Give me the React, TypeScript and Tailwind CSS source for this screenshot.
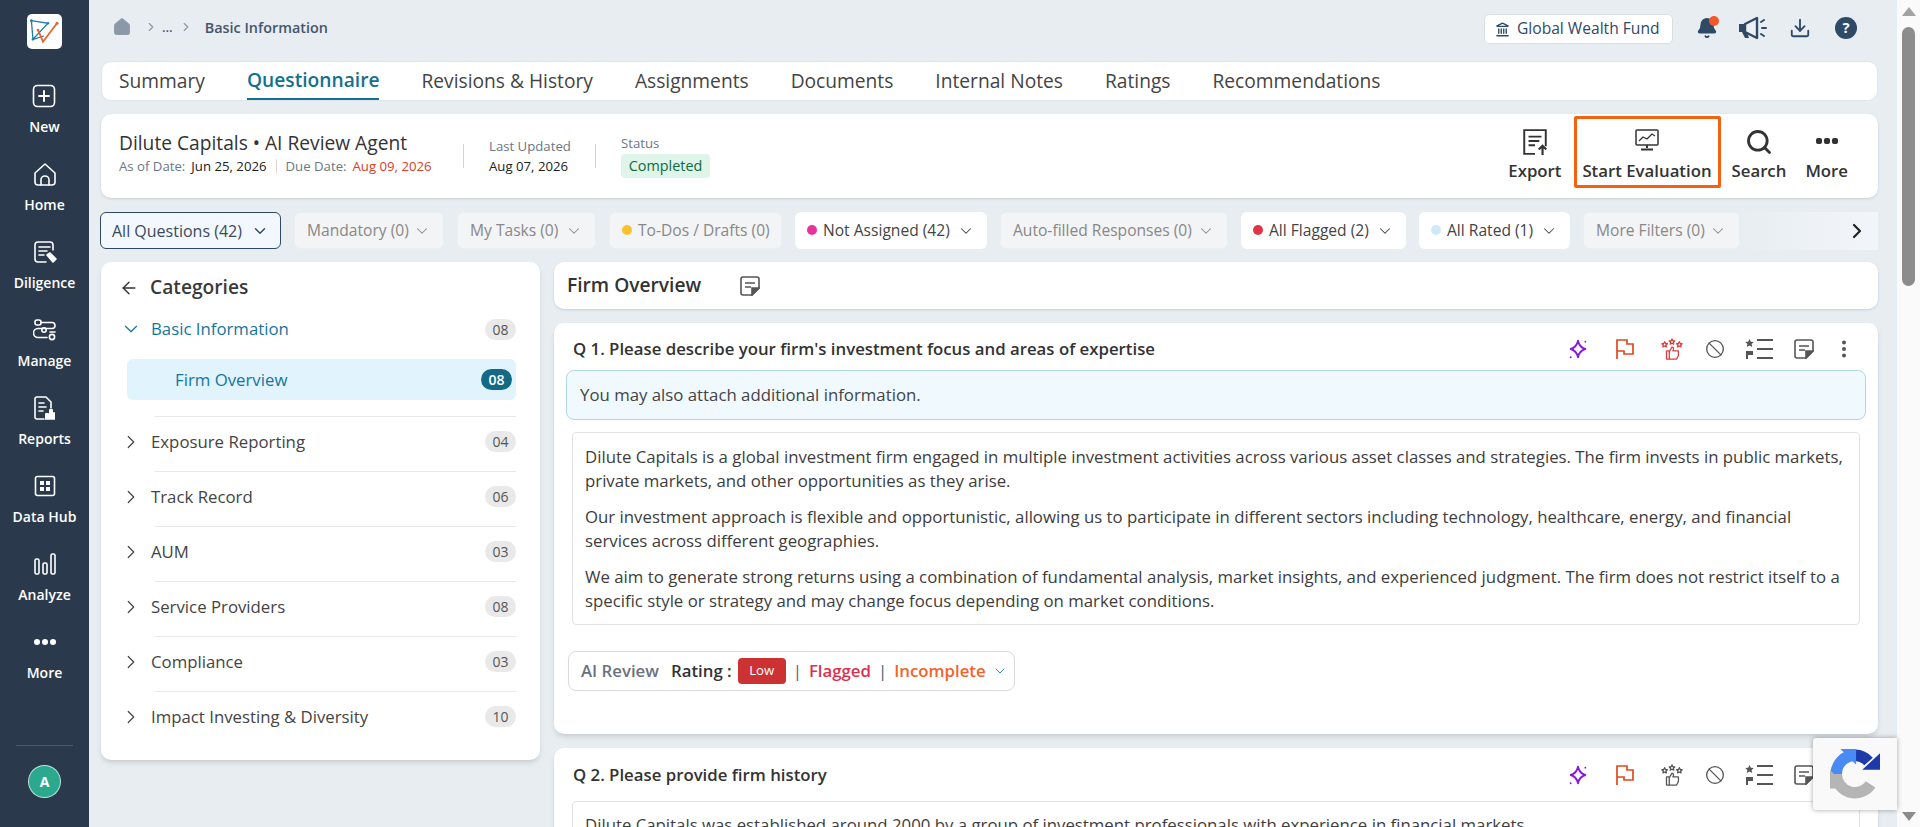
import * as React from 'react';
import {
  Home as HomeIcon, ChevronRight, ChevronDown, ArrowLeft, Landmark, Download, Bell,
  Search, Ban, EllipsisVertical,
} from 'lucide-react';

const sw = { fill: 'none', stroke: 'currentColor', strokeWidth: 1.6, strokeLinecap: 'round', strokeLinejoin: 'round' } as const;

function Logo() {
  return (
    <svg viewBox="0 0 35 35" className="h-[35px] w-[35px] rounded-[5px] bg-white">
      <path d="M4.400 6.700 21 9.300 6 25.300Z M4.400 6.700 6 25.300 17 22" fill="none" stroke="#1f7fa8" strokeWidth="1.3" />
      <path d="M11 16 16 27.700 30 9.300" fill="none" stroke="#e8642c" strokeWidth="1.8" />
      <circle cx="30" cy="9.300" r="1.500" fill="#e8642c" />
      <circle cx="11" cy="16" r="1.300" fill="#e8642c" />
      <circle cx="4.400" cy="6.700" r="1.400" fill="#1f7fa8" />
      <circle cx="21" cy="9.300" r="1.200" fill="#1f7fa8" />
      <circle cx="6" cy="25.300" r="1.300" fill="#1f7fa8" />
    </svg>
  );
}

const NewIcon = () => (
  <svg viewBox="0 0 24 24" className="h-6 w-6" {...sw}>
    <rect x="1.500" y="1.500" width="21" height="21" rx="4" />
    <path d="M12 7v10M7 12h10" strokeWidth="2" />
  </svg>
);
const HomeNav = () => (
  <svg viewBox="0 0 24 24" className="h-6 w-6" {...sw}>
    <path d="M2 11 12 2l10 9v9a3 3 0 0 1-3 3H5a3 3 0 0 1-3-3Z" />
    <path d="M8 23v-5a4 4 0 0 1 8 0v5" />
  </svg>
);
const DiligenceIcon = () => (
  <svg viewBox="0 0 24 24" className="h-6 w-6" {...sw}>
    <path d="M20 10V5a3 3 0 0 0-3-3H5a3 3 0 0 0-3 3v14a3 3 0 0 0 3 3h8" />
    <path d="M6 7h11M6 11h8M6 15h5" />
    <path d="m14 15 3-2 6 6-3 3Z" fill="currentColor" />
  </svg>
);
const ManageIcon = () => (
  <svg viewBox="0 0 24 24" className="h-6 w-6" {...sw}>
    <rect x="2" y="2" width="6" height="5" rx="2" />
    <path d="M8 4.500h11a3 3 0 0 1 0 6H5a3 3 0 0 0 0 9h9" />
    <circle cx="11" cy="12" r="2.200" />
    <circle cx="19" cy="19" r="2.600" />
    <path d="M17 14h5" />
  </svg>
);
const ReportsIcon = () => (
  <svg viewBox="0 0 24 24" className="h-6 w-6" {...sw}>
    <path d="M12 23H5a2 2 0 0 1-2-2V3a2 2 0 0 1 2-2h9l5 5v6" />
    <path d="M7 7h5M7 11h7M7 15h4" />
    <path d="M14 23v-5h2v5M18 23v-9h2v9M22 23v-6" strokeWidth="2" />
  </svg>
);
const DataHubIcon = () => (
  <svg viewBox="0 0 24 24" className="h-6 w-6" {...sw}>
    <rect x="2.500" y="2.500" width="19" height="19" rx="2" />
    <rect x="7" y="7" width="4" height="4" fill="currentColor" stroke="none" />
    <rect x="13" y="7" width="4" height="4" fill="currentColor" stroke="none" />
    <rect x="7" y="13" width="4" height="4" fill="currentColor" stroke="none" />
    <rect x="13" y="13" width="4" height="4" fill="currentColor" stroke="none" />
  </svg>
);
const AnalyzeIcon = () => (
  <svg viewBox="0 0 24 24" className="h-6 w-6" {...sw}>
    <rect x="2" y="7" width="4" height="15" rx="1.500" />
    <rect x="10" y="11" width="4" height="11" rx="1.500" />
    <rect x="18" y="2" width="4" height="20" rx="1.500" />
  </svg>
);
const MoreDots = () => (
  <svg viewBox="0 0 24 24" className="h-6 w-6" fill="currentColor">
    <circle cx="4" cy="12" r="3" />
    <circle cx="12" cy="12" r="3" />
    <circle cx="20" cy="12" r="3" />
  </svg>
);

const sideItems = [
  { label: 'New', icon: NewIcon },
  { label: 'Home', icon: HomeNav },
  { label: 'Diligence', icon: DiligenceIcon },
  { label: 'Manage', icon: ManageIcon },
  { label: 'Reports', icon: ReportsIcon },
  { label: 'Data Hub', icon: DataHubIcon },
  { label: 'Analyze', icon: AnalyzeIcon },
  { label: 'More', icon: MoreDots },
];

function Sidebar() {
  return (
    <aside className="flex h-full w-[89px] shrink-0 flex-col items-center bg-[#2a3a4c] text-white">
      <div className="mt-[14px] mb-[35px]"><Logo /></div>
      {sideItems.map((item) => {
        const Icon = item.icon;
        return (
          <div key={item.label} className="flex h-[78px] flex-col items-center">
            <div className="flex h-[24px] items-center"><Icon /></div>
            <span className="mt-[10px] text-[14px] leading-[18px] font-semibold">{item.label}</span>
          </div>
        );
      })}
      <div className="mt-auto mb-[29px] flex w-[57px] flex-col items-center border-t border-[#4a5a6c] pt-[19px]">
        <div className="flex h-[33px] w-[33px] items-center justify-center rounded-full border border-white/70 bg-[#2aa98f] text-[14px] font-bold">A</div>
      </div>
    </aside>
  );
}

const MegaphoneIcon = () => (
  <svg viewBox="0 0 30 24" className="h-[24px] w-[30px]">
    <path d="M1 8h6v8H1Z M4 16h5l2 6H7Z" fill="#2f4a66" />
    <path d="M7 8 19 2v20L7 16Z" fill="#fff" fillOpacity="0.2" stroke="#2f4a66" strokeWidth="2.400" strokeLinejoin="round" />
    <path d="m23 6 3-2M24 12h4M23 18l3 2" stroke="#2f4a66" strokeWidth="2" strokeLinecap="round" />
  </svg>
);

function TopBar() {
  return (
    <div className="flex h-[61px] shrink-0 items-center justify-between pr-[21px] pb-[6px] pl-[11px]">
      <div className="flex items-center text-[#8a98a8]">
        <HomeIcon className="h-[20px] w-[20px]" fill="currentColor" strokeWidth={1} />
        <ChevronRight className="ml-[12px] h-[14px] w-[14px]" />
        <span className="ml-[4px] text-[13px] font-semibold text-[#4a6078]">...</span>
        <ChevronRight className="ml-[6px] h-[14px] w-[14px]" />
        <span className="ml-[12px] text-[14.4px] font-semibold text-[#44566a]">Basic Information</span>
      </div>
      <div className="flex items-center text-[#2f4a66]">
        <div className="mt-[3px] flex h-[30px] w-[189px] items-center gap-[7px] rounded-[5px] border border-[#d9dfe6] bg-white pl-[10px] text-[15.6px]">
          <Landmark className="h-[15px] w-[15px]" strokeWidth={2.2} />
          Global Wealth Fund
        </div>
        <div className="relative ml-[23px] flex">
          <Bell className="h-[22px] w-[22px]" fill="currentColor" />
          <span className="absolute -top-[1px] right-[-1px] h-[10px] w-[10px] rounded-full bg-[#f2582a]" />
        </div>
        <span className="ml-[20px] flex"><MegaphoneIcon /></span>
        <Download className="ml-[21px] h-[22px] w-[22px]" />
        <div className="ml-[24px] flex h-[22px] w-[22px] items-center justify-center rounded-full bg-[#2f4a66] text-[15px] font-bold text-white">?</div>
      </div>
    </div>
  );
}

const tabs = ['Summary', 'Questionnaire', 'Revisions & History', 'Assignments', 'Documents', 'Internal Notes', 'Ratings', 'Recommendations'];

function Tabs() {
  return (
    <div className="flex h-[40px] shrink-0 items-stretch gap-[42px] rounded-[10px] border border-[#e0e5ea] bg-white pl-[17px]">
      {tabs.map((t) => (
        <div
          key={t}
          className={t === 'Questionnaire'
            ? 'flex items-center border-b-[2px] border-[#14708f] pt-[1px] text-[19.2px] font-semibold text-[#14708f]'
            : 'flex items-center text-[19.2px] text-[#444]'}
        >
          {t}
        </div>
      ))}
    </div>
  );
}

const StartEvalIcon = () => (
  <svg viewBox="0 0 24 24" className="h-[24px] w-[24px]" fill="none" stroke="#333" strokeWidth="1.500" strokeLinejoin="round">
    <rect x="1" y="2" width="22" height="15" rx="1" />
    <path d="m4 13 4-4 4 2 5-5 3 2" strokeWidth="1.200" />
    <path d="M12 17v3M6 21.500h12" strokeWidth="2" />
  </svg>
);
const ExportIcon = () => (
  <svg viewBox="0 0 24 26" className="h-[28px] w-[26px]" fill="none" stroke="#333" strokeWidth="1.800">
    <path d="M12 24H2V2h20v15" />
    <path d="M6 8h12M6 12h10M6 16h6" />
    <path d="M19 25v-8M15.500 20l3.500-3.500 3.500 3.500" strokeWidth="2" />
  </svg>
);
const MoreSquares = () => (
  <svg viewBox="0 0 24 28" className="h-[28px] w-[24px]" fill="#333">
    <rect x="1" y="10" width="6" height="6" rx="2" />
    <rect x="9" y="10" width="6" height="6" rx="2" />
    <rect x="17" y="10" width="6" height="6" rx="2" />
  </svg>
);

function HeaderCard() {
  return (
    <div className="mt-[13px] flex h-[84px] shrink-0 items-center justify-between rounded-[10px] bg-white pr-[30px] pl-[18px] shadow-sm">
      <div className="flex items-center">
        <div className="mb-[8px] w-[319px]">
          <div className="mb-[2px] text-[19.2px] leading-[25px] text-[#333]">Dilute Capitals • AI Review Agent</div>
          <div className="flex items-center text-[13.2px] leading-[18px]">
            <span className="text-[#6b7785]">As of Date:</span>
            <span className="ml-[6px] font-medium text-[#222]">Jun 25, 2026</span>
            <span className="mx-[9px] h-[14px] w-px bg-[#e3d5d5]" />
            <span className="text-[#6b7785]">Due Date:</span>
            <span className="ml-[6px] font-medium text-[#d8402a]">Aug 09, 2026</span>
          </div>
        </div>
        <div className="mx-[25px] h-[24px] w-px bg-[#cfd4da]" />
        <div className="w-[81px] whitespace-nowrap">
          <div className="text-[13.2px] leading-[18px] text-[#6b7785]">Last Updated</div>
          <div className="mt-[2px] text-[13.2px] leading-[18px] font-medium text-[#222]">Aug 07, 2026</div>
        </div>
        <div className="mx-[25px] h-[24px] w-px bg-[#cfd4da]" />
        <div>
          <div className="text-[13.2px] leading-[16px] text-[#6b7785]">Status</div>
          <div className="mt-[3px] flex h-[24px] w-[89px] items-center justify-center rounded-[4px] bg-[#dff5ea] text-[14.4px] text-[#0d6b3d]">Completed</div>
        </div>
      </div>
      <div className="flex items-center text-[16.8px] font-semibold text-[#333]">
        <div className="flex flex-col items-center">
          <ExportIcon />
          <span className="mt-[2px]">Export</span>
        </div>
        <div className="mb-[8px] ml-[12px] flex h-[72px] w-[147px] flex-col items-center justify-center rounded-[2px] border-[3px] border-[#f4620f] pt-[8px]">
          <StartEvalIcon />
          <span className="mt-[6px]">Start Evaluation</span>
        </div>
        <div className="ml-[11px] flex flex-col items-center">
          <Search className="h-[28px] w-[28px]" strokeWidth={2.4} />
          <span className="mt-[2px]">Search</span>
        </div>
        <div className="ml-[19px] flex flex-col items-center">
          <MoreSquares />
          <span className="mt-[2px]">More</span>
        </div>
      </div>
    </div>
  );
}

const filters = [
  { label: 'All Questions (42)', w: 'w-[181px]', kind: 'active' },
  { label: 'Mandatory (0)', w: 'w-[150px]', kind: 'off' },
  { label: 'My Tasks (0)', w: 'w-[139px]', kind: 'off' },
  { label: 'To-Dos / Drafts (0)', w: 'w-[173px]', kind: 'off', dot: 'bg-[#fbc02d]', noChevron: true },
  { label: 'Not Assigned (42)', w: 'w-[192px]', kind: 'on', dot: 'bg-[#e6339a]' },
  { label: 'Auto-filled Responses (0)', w: 'w-[228px]', kind: 'off' },
  { label: 'All Flagged (2)', w: 'w-[165px]', kind: 'on', dot: 'bg-[#e03444]' },
  { label: 'All Rated (1)', w: 'w-[151px]', kind: 'on', dot: 'bg-[#cfe9fb]' },
  { label: 'More Filters (0)', w: 'w-[157px]', kind: 'off' },
];

function Filters() {
  return (
    <div className="relative mt-[13px] -ml-[1px] flex h-[37px] shrink-0 gap-[13px]">
      {filters.map((f) => (
        <div
          key={f.label}
          className={
            f.kind === 'active'
              ? `${f.w} flex shrink-0 items-center justify-between rounded-[6px] border border-[#2f4a66] bg-[#f2f8fd] px-[11px] text-[16px] font-medium text-[#3a4a5c]`
              : f.kind === 'on'
                ? `${f.w} flex shrink-0 items-center justify-between rounded-[6px] bg-white px-[12px] text-[15.6px] text-[#444]`
                : `${f.w} flex shrink-0 items-center justify-between rounded-[6px] border border-[#eceef0] bg-[#f3f4f5] px-[12px] text-[15.6px] text-[#888]`
          }
        >
          <span className="flex items-center gap-[6px] whitespace-nowrap">
            {f.dot && <span className={`${f.dot} h-[10px] w-[10px] rounded-full`} />}
            {f.label}
          </span>
          {!f.noChevron && <ChevronDown className="h-[18px] w-[18px]" strokeWidth={f.kind === 'active' ? 2 : 1.4} />}
        </div>
      ))}
      <div className="absolute top-0 right-0 flex h-[38px] w-[138px] items-center justify-end bg-gradient-to-r from-transparent to-[#f2f6fb] pr-[9px]">
        <ChevronRight className="h-[24px] w-[24px] text-[#222]" strokeWidth={2.2} />
      </div>
    </div>
  );
}

const categories = [
  { name: 'Exposure Reporting', n: '04' },
  { name: 'Track Record', n: '06' },
  { name: 'AUM', n: '03' },
  { name: 'Service Providers', n: '08' },
  { name: 'Compliance', n: '03' },
  { name: 'Impact Investing & Diversity', n: '10' },
];

function Categories() {
  return (
    <div className="h-[498px] w-[439px] shrink-0 rounded-[10px] bg-white pt-[12px] pr-[24px] pl-[18px] shadow-md">
      <div className="flex h-[27px] items-center">
        <ArrowLeft className="h-[20px] w-[20px] text-[#333]" strokeWidth={1.7} />
        <span className="ml-[11px] text-[19.2px] font-semibold text-[#3a3a3a]">Categories</span>
      </div>
      <div className="mt-[16px] flex h-[24px] items-center justify-between text-[#14769f]">
        <span className="flex items-center text-[16.8px]">
          <ChevronDown className="mr-[9px] ml-[1px] h-[22px] w-[22px]" strokeWidth={1.3} />
          Basic Information
        </span>
        <span className="flex h-[21px] w-[31px] items-center justify-center rounded-full bg-[#e9e9e9] text-[14px] text-[#555]">08</span>
      </div>
      <div className="mt-[18px] ml-[8px] flex h-[41px] items-center justify-between rounded-[6px] bg-[#e1f3fd] pr-[4px] pl-[48px] text-[16.8px] text-[#14769f]">
        Firm Overview
        <span className="flex h-[21px] w-[31px] items-center justify-center rounded-full bg-[#136a85] text-[14px] font-semibold text-white">08</span>
      </div>
      <div className="mt-[16px] ml-[36px] border-t border-[#e8e8e8]" />
      {categories.map((c, i) => (
        <div key={c.name}>
          <div className="flex h-[54px] items-center justify-between pb-[5px]">
            <span className="flex items-center text-[16.8px] text-[#444]">
              <ChevronRight className="mr-[9px] ml-[1px] h-[22px] w-[22px]" strokeWidth={1.3} />
              {c.name}
            </span>
            <span className="flex h-[21px] w-[31px] items-center justify-center rounded-full bg-[#e9e9e9] text-[14px] text-[#555]">{c.n}</span>
          </div>
          {i < categories.length - 1 && <div className="ml-[36px] border-t border-[#e8e8e8]" />}
        </div>
      ))}
    </div>
  );
}

const AiStar = () => (
  <svg viewBox="0 0 24 24" className="h-[22px] w-[22px]" fill="none" stroke="#8a14e0" strokeWidth="2" strokeLinejoin="round">
    <path d="M12 3c1 5 3 7.500 8 9-5 1.500-7 4-8 9-1-5-3-7.500-8-9 5-1.500 7-4 8-9Z" />
    <circle cx="20" cy="4" r="1" fill="#8a14e0" stroke="none" />
    <circle cx="4" cy="21" r="1" fill="#8a14e0" stroke="none" />
  </svg>
);
const FlagIcon = () => (
  <svg viewBox="0 0 20 22" className="h-[22px] w-[20px]" fill="none" stroke="#de4a1e" strokeWidth="1.700">
    <path d="M2 21V2h10v4h6v10h-9v-3H2" />
  </svg>
);
const RateIcon = ({ color }: { color: string }) => (
  <svg viewBox="0 0 24 24" className="h-[22px] w-[22px]" fill="none" stroke={color} strokeWidth="1.400" strokeLinejoin="round">
    <path d="m4 4 1 2 2 .2-1.500 1.500.4 2-1.900-1-1.900 1 .4-2L1 6.200 3 6Z" />
    <path d="m12 1 1 2 2 .2-1.500 1.500.4 2-1.900-1-1.900 1 .4-2L9 3.200 11 3Z" />
    <path d="m20 4 1 2 2 .2-1.500 1.500.4 2-1.900-1-1.900 1 .4-2L17 6.200 19 6Z" />
    <path d="M6 14h3v9H6ZM9 15l3-5c2 0 2 2 1 4h6v5l-2 4H9" />
  </svg>
);
const ListIcon = () => (
  <svg viewBox="0 0 28 22" className="h-[22px] w-[28px]" fill="#555">
    <path d="m4.500 1 1.300 2.800 3 .3-2.200 2 .6 3-2.700-1.500-2.700 1.500.6-3-2.200-2 3-.3Z" />
    <path d="M1 13h7v4H3v4H1Z" />
    <rect x="12" y="1" width="16" height="2" />
    <rect x="12" y="10" width="16" height="2" />
    <rect x="12" y="19" width="16" height="2" />
  </svg>
);
const NoteIcon = () => (
  <svg viewBox="0 0 20 20" className="h-[20px] w-[20px]" fill="none" stroke="#555" strokeWidth="1.600">
    <path d="M12 19H3a2 2 0 0 1-2-2V3a2 2 0 0 1 2-2h14a2 2 0 0 1 2 2v9Z" />
    <path d="M5 7h10M5 11h6" />
    <path d="M12 19v-7h7Z" fill="#555" />
  </svg>
);

function ActionIcons({ rateColor }: { rateColor: string }) {
  return (
    <div className="flex items-center text-[#555]">
      <AiStar />
      <span className="ml-[26px]"><FlagIcon /></span>
      <span className="ml-[26px]"><RateIcon color={rateColor} /></span>
      <Ban className="ml-[22px] h-[20px] w-[20px]" strokeWidth={1.6} />
      <span className="ml-[20px]"><ListIcon /></span>
      <span className="ml-[21px]"><NoteIcon /></span>
      <EllipsisVertical className="ml-[19px] h-[22px] w-[22px]" strokeWidth={2.4} />
    </div>
  );
}

function QuestionOne() {
  return (
    <div className="mt-[14px] h-[411px] rounded-[10px] bg-white shadow-md">
      <div className="flex h-[47px] items-center justify-between pt-[4px] pr-[23px] pl-[19px]">
        <span className="text-[16.8px] font-semibold text-[#333]">Q 1. Please describe your firm's investment focus and areas of expertise</span>
        <ActionIcons rateColor="#de3b3b" />
      </div>
      <div className="mx-[12px] flex h-[50px] items-center rounded-[8px] border border-[#b2d6e8] bg-[#f0f9fe] pl-[13px] text-[16.8px] text-[#444]">
        You may also attach additional information.
      </div>
      <div className="mx-[18px] mt-[12px] h-[193px] rounded-[4px] border border-[#e3e3e3] px-[12px] pt-[12px] text-[16.8px] leading-[24px] text-[#3d3d3d]">
        <p>Dilute Capitals is a global investment firm engaged in multiple investment activities across various asset classes and strategies. The firm invests in public markets, private markets, and other opportunities as they arise.</p>
        <p className="mt-[12px]">Our investment approach is flexible and opportunistic, allowing us to participate in different sectors including technology, healthcare, energy, and financial services across different geographies.</p>
        <p className="mt-[12px]">We aim to generate strong returns using a combination of fundamental analysis, market insights, and experienced judgment. The firm does not restrict itself to a specific style or strategy and may change focus depending on market conditions.</p>
      </div>
      <div className="mt-[26px] ml-[14px] flex h-[40px] w-[447px] items-center rounded-[8px] border border-[#d9dbe3] pl-[12px] text-[16.8px] font-semibold">
        <span className="text-[#6a7280]">AI Review</span>
        <span className="ml-[12px] text-[#333]">Rating :</span>
        <span className="ml-[6px] flex h-[26px] w-[48px] items-center justify-center rounded-[4px] bg-[#cd3232] text-[13.2px] font-normal text-white">Low</span>
        <span className="ml-[7px] font-normal text-[#4a6078]">|</span>
        <span className="ml-[7px] text-[#dc2f4f]">Flagged</span>
        <span className="ml-[7px] font-normal text-[#4a6078]">|</span>
        <span className="ml-[7px] text-[#f4622a]">Incomplete</span>
        <ChevronDown className="ml-[6px] h-[16px] w-[16px] text-[#2a8fc0]" strokeWidth={1.5} />
      </div>
    </div>
  );
}

function QuestionTwo() {
  return (
    <div className="mt-[14px] h-[200px] rounded-[10px] bg-white shadow-md">
      <div className="flex h-[53px] items-center justify-between pr-[23px] pl-[19px]">
        <span className="text-[16.8px] font-semibold text-[#333]">Q 2. Please provide firm history</span>
        <ActionIcons rateColor="#555" />
      </div>
      <div className="mx-[18px] h-[120px] rounded-[4px] border border-[#e3e3e3] px-[12px] pt-[11px] text-[16.8px] leading-[24px] text-[#3d3d3d]">
        Dilute Capitals was established around 2000 by a group of investment professionals with experience in financial markets.
      </div>
    </div>
  );
}

function Recaptcha() {
  return (
    <div className="absolute top-[738px] right-[23px] flex h-[72px] w-[84px] items-center justify-center rounded-l-[3px] bg-[#f9f9f9] shadow-[0_0_5px_rgba(0,0,0,0.35)]">
      <svg viewBox="0 0 48 48" className="h-[50px] w-[50px]" fill="none" strokeWidth="11">
        <path d="M6 24A18 18 0 0 1 24 6" stroke="#4a8af4" />
        <path d="M24 6a18 18 0 0 1 13 6" stroke="#1c3aa9" />
        <path d="M31 20h17V4Z" fill="#1c3aa9" />
        <path d="M6 24a18 18 0 0 0 33 10" stroke="#b5b5b5" />
        <path d="M0 20v18h17Z" fill="#b5b5b5" />
        <path d="M10 0h15v15Z" fill="#4a8af4" />
      </svg>
    </div>
  );
}

function Scrollbar() {
  return (
    <div className="flex h-full w-[23px] shrink-0 flex-col items-center bg-[#fafafa]">
      <div className="mt-[7px] h-0 w-0 border-x-[7px] border-b-[9px] border-x-transparent border-b-[#a3a3a3]" />
      <div className="mt-[11px] h-[259px] w-[13px] rounded-full bg-[#8c8c8c]" />
      <div className="mt-auto mb-[6px] h-0 w-0 border-x-[7px] border-t-[9px] border-x-transparent border-t-[#8c8c8c]" />
    </div>
  );
}

export default function App() {
  return (
    <div className="relative flex h-[827px] w-[1920px] overflow-hidden bg-[#e8edf2] font-['Open_Sans','Noto_Sans',sans-serif]">
      <Sidebar />
      <main className="flex min-w-0 flex-1 flex-col overflow-hidden pr-[19px] pl-[12px]">
        <TopBar />
        <Tabs />
        <HeaderCard />
        <div className="mt-[1px] shrink-0"><Filters /></div>
        <div className="mt-[13px] flex shrink-0 gap-[14px]">
          <Categories />
          <div className="min-w-0 flex-1">
            <div className="flex h-[47px] items-center rounded-[10px] bg-white pl-[13px] shadow-sm">
              <span className="text-[19.2px] font-semibold text-[#333]">Firm Overview</span>
              <span className="ml-[39px]"><NoteIcon /></span>
            </div>
            <QuestionOne />
            <QuestionTwo />
          </div>
        </div>
      </main>
      <Scrollbar />
      <Recaptcha />
    </div>
  );
}
